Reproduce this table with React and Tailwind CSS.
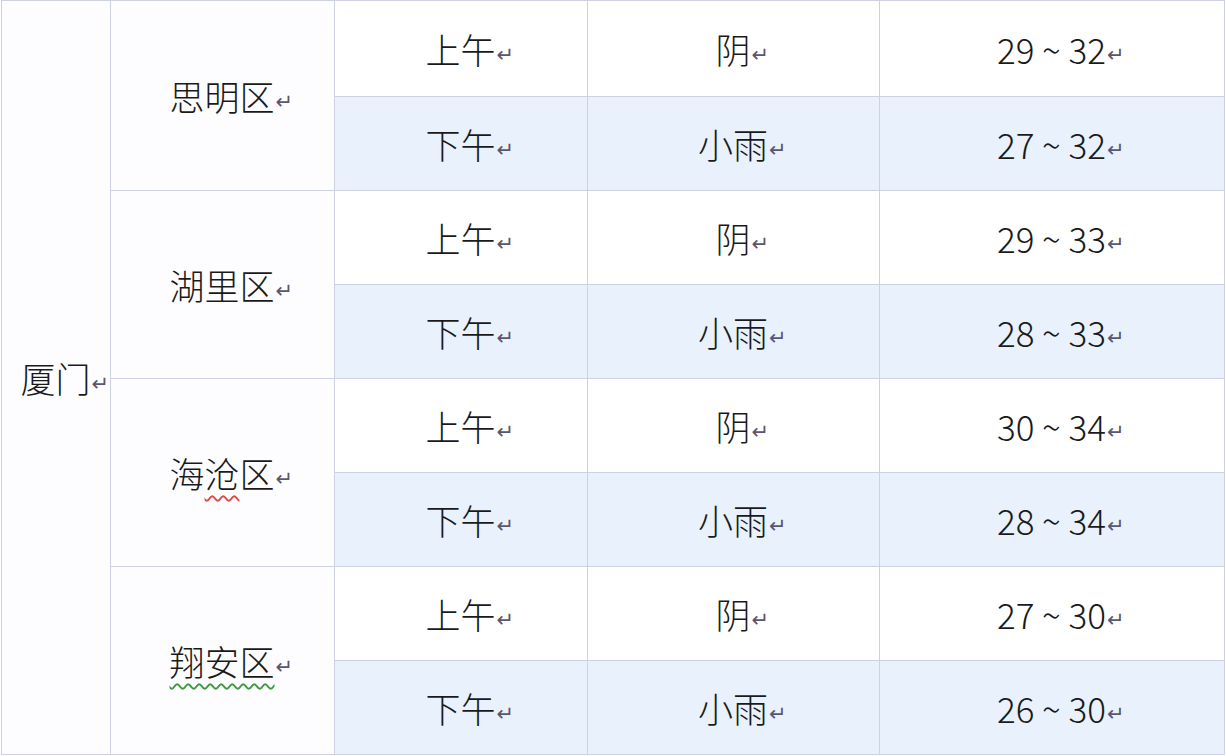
const rows = [
  { district: "思明区", mark: null, data: [["29 ~ 32", "27 ~ 32"]] },
  { district: "湖里区", mark: null, data: [["29 ~ 33", "28 ~ 33"]] },
  { district: "海沧区", mark: "red", data: [["30 ~ 34", "28 ~ 34"]] },
  { district: "翔安区", mark: "green", data: [["27 ~ 30", "26 ~ 30"]] },
];

// Word paragraph mark
function Ret() {
  return (
    <span
      className="inline-block w-0 text-[21px] text-[#5c5570] align-[2px] pl-px font-normal"
      style={{ fontFamily: '"DejaVu Sans", sans-serif' }}
    >
      ↵
    </span>
  );
}

function District({ name, mark }) {
  if (mark === "red") {
    return (
      <>
        海
        <span className="underline decoration-wavy decoration-[#e04848] decoration-[1.5px] underline-offset-[7px]">沧</span>
        区
      </>
    );
  }
  if (mark === "green") {
    return (
      <span className="underline decoration-wavy decoration-[#3c9a3c] decoration-[1.5px] underline-offset-[7px]">{name}</span>
    );
  }
  return name;
}

export default function App() {
  const cell = "border border-[#cdd1e2] text-center align-middle";
  const shade = "bg-[#e8f1fc]";
  return (
    <div
      className="w-[1226px] h-[756px] bg-white text-[#1a1a1a] text-[35px] leading-none font-light"
      style={{ fontFamily: '"Noto Sans CJK SC", "Noto Sans", sans-serif' }}
    >
      <table className="table-fixed border-collapse w-[1224px] ml-px">
        <colgroup>
          <col className="w-[109px]" />
          <col className="w-[224px]" />
          <col className="w-[253px]" />
          <col className="w-[292px]" />
          <col className="w-[345px]" />
        </colgroup>
        <tbody>
          {rows.map((r, i) => (
            <>
              <tr key={r.district + "am"} className={i === 0 ? "h-[96px]" : "h-[94px]"}>
                {i === 0 && (
                  <td rowSpan={8} className={cell + " bg-[#fdfdff]"}>
                    厦门<Ret />
                  </td>
                )}
                <td rowSpan={2} className={cell + " bg-[#fdfdff]"}>
                  <District name={r.district} mark={r.mark} />
                  <Ret />
                </td>
                <td className={cell}>上午<Ret /></td>
                <td className={cell}>阴<Ret /></td>
                <td className={cell}>{r.data[0][0]}<Ret /></td>
              </tr>
              <tr key={r.district + "pm"} className="h-[94px]">
                <td className={cell + " " + shade}>下午<Ret /></td>
                <td className={cell + " " + shade}>小雨<Ret /></td>
                <td className={cell + " " + shade}>{r.data[0][1]}<Ret /></td>
              </tr>
            </>
          ))}
        </tbody>
      </table>
    </div>
  );
}
